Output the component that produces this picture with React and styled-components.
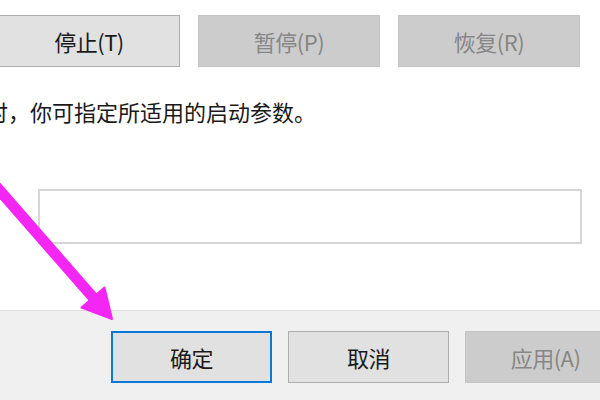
import React from "react";
import styled, { createGlobalStyle } from "styled-components";

const Global = createGlobalStyle`
  html, body { margin: 0; padding: 0; background: #ffffff; }
  body { font-family: "Noto Sans CJK SC", "Noto Sans", sans-serif; }
`;

const Window = styled.div`
  position: relative;
  width: 600px;
  height: 400px;
  overflow: hidden;
  display: flex;
  flex-direction: column;
  background: #ffffff;
  font-family: "Noto Sans CJK SC", "Noto Sans", sans-serif;
`;

const Main = styled.div`
  flex: 1;
  padding-top: 15px;
  display: flex;
  flex-direction: column;
  align-items: flex-start;
`;

const ButtonRow = styled.div`
  display: flex;
  gap: ${(p) => p.$gap}px;
  margin-left: ${(p) => p.$offset}px;
`;

const Button = styled.div`
  box-sizing: border-box;
  flex: none;
  width: ${(p) => p.$w}px;
  height: 52px;
  display: flex;
  align-items: center;
  justify-content: center;
  font-size: 22px;
  letter-spacing: -0.5px;
  color: ${(p) => (p.$disabled ? "#868686" : "#1a1a1a")};
  background: ${(p) => (p.$disabled ? "#cccccc" : "#e1e1e1")};
  border: ${(p) =>
    p.$default
      ? "2px solid #0a78d7"
      : p.$disabled
      ? "1px solid #c4c4c4"
      : "1px solid #adadad"};
`;

const Description = styled.div`
  margin-top: 29px;
  margin-left: -14px;
  font-size: 22px;
  line-height: 30px;
  color: #1a1a1a;
  white-space: nowrap;
`;

const ParamInput = styled.div`
  box-sizing: border-box;
  margin-top: 63px;
  margin-left: 38px;
  width: 544px;
  height: 55px;
  border: 2px solid #d6d6d6;
  background: #ffffff;
`;

const Footer = styled.div`
  box-sizing: border-box;
  flex: none;
  height: 90px;
  background: #f0f0f0;
  border-top: 1px solid #e2e2e2;
  padding-top: 20px;
  padding-left: 111px;
`;

const Overlay = styled.svg`
  position: absolute;
  left: 0;
  top: 0;
  pointer-events: none;
`;

export default function App() {
  return (
    <>
      <Global />
      <Window>
        <Main>
          <ButtonRow $gap={18} $offset={-2}>
            <Button $w={182}>停止(T)</Button>
            <Button $w={182} $disabled>暂停(P)</Button>
            <Button $w={182} $disabled>恢复(R)</Button>
          </ButtonRow>
          <Description>时，你可指定所适用的启动参数。</Description>
          <ParamInput />
        </Main>
        <Footer>
          <ButtonRow $gap={16} $offset={0}>
            <Button $w={161} $default>确定</Button>
            <Button $w={161}>取消</Button>
            <Button $w={161} $disabled>应用(A)</Button>
          </ButtonRow>
        </Footer>
        <Overlay width="600" height="400" viewBox="0 0 600 400">
          <line x1="-20" y1="168" x2="97" y2="302" stroke="#f426f4" strokeWidth="11" />
          <polygon points="112,319 104.5,287.5 81.5,307.5" fill="#f426f4" stroke="#f426f4" strokeWidth="2" strokeLinejoin="round" />
        </Overlay>
      </Window>
    </>
  );
}
